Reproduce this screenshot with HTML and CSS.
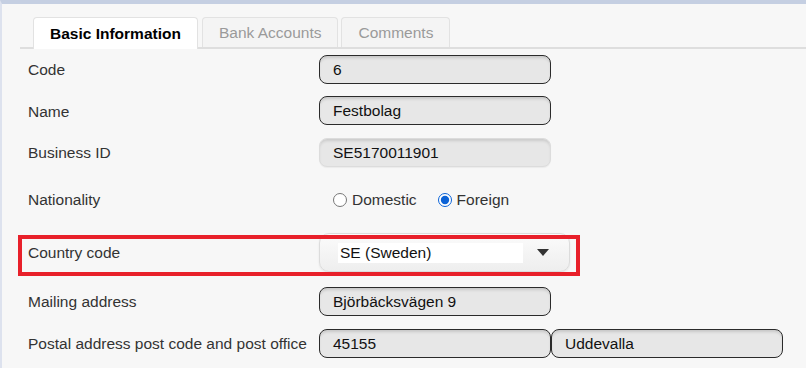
FILE: index.html
```html
<!DOCTYPE html>
<html>
<head>
<meta charset="utf-8">
<link rel="stylesheet" href="styles.css">
</head>
<body>
<div class="page">
  <div class="tabbar">
    <div class="tab active">Basic Information</div>
    <div class="tab">Bank Accounts</div>
    <div class="tab">Comments</div>
  </div>
  <div class="form">
    <div class="row r-code">
      <div class="label">Code</div>
      <div class="field"><div class="input">6</div></div>
    </div>
    <div class="row r-name">
      <div class="label">Name</div>
      <div class="field"><div class="input">Festbolag</div></div>
    </div>
    <div class="row r-bid">
      <div class="label">Business ID</div>
      <div class="field"><div class="input disabled">SE5170011901</div></div>
    </div>
    <div class="row r-nat">
      <div class="label">Nationality</div>
      <div class="field radios">
        <label class="radio"><input type="radio" name="nat"> Domestic</label>
        <label class="radio"><input type="radio" name="nat" checked> Foreign</label>
      </div>
    </div>
    <div class="row r-country">
      <div class="label">Country code</div>
      <div class="field">
        <div class="select">
          <div class="select-text">SE (Sweden)</div>
          <div class="arrow"></div>
        </div>
      </div>
      <div class="highlight"></div>
    </div>
    <div class="row r-mail">
      <div class="label">Mailing address</div>
      <div class="field"><div class="input">Björbäcksvägen 9</div></div>
    </div>
    <div class="row r-postal">
      <div class="label">Postal address post code and post office</div>
      <div class="field pair"><div class="input">45155</div><div class="input">Uddevalla</div></div>
    </div>
  </div>
</div>
</body>
</html>
```

FILE: styles.css
```css
html, body {
  margin: 0;
  padding: 0;
}
body {
  background: #f7f7f7;
  font-family: "Liberation Sans", Arial, sans-serif;
  font-size: 15.5px;
  color: #333;
  border-top: 4px solid #c5cfe2;
  border-left: 2px solid #dde2ee;
  height: 364px;
  overflow: hidden;
}
.page {
  padding-top: 13px;
}
.tabbar {
  display: flex;
  margin-left: 18px;
  padding-left: 13px;
  border-bottom: 2px solid #dedede;
  height: 30px;
}
.tab {
  height: 30px;
  box-sizing: border-box;
  padding: 0 16px;
  margin-right: 3px;
  border: 1px solid #e2e2e2;
  border-bottom: none;
  border-radius: 4px 4px 0 0;
  background: #f4f4f4;
  color: #9a9a9a;
  display: flex;
  align-items: center;
}
.tab.active {
  background: #fff;
  color: #000;
  font-weight: bold;
  height: 32px;
  margin-right: 4px;
}
.form {
  padding-left: 26px;
}
.row {
  display: grid;
  grid-template-columns: 291px auto;
  align-items: center;
  position: relative;
  height: 29px;
}
.r-code { margin-top: 6px; }
.r-name { margin-top: 12px; }
.r-bid { margin-top: 13px; }
.r-nat { margin-top: 18px; }
.r-country { margin-top: 19px; height: 39px; }
.r-mail { margin-top: 15px; }
.r-postal { margin-top: 13px; }
.label {
  color: #333;
}
.r-name .label { margin-top: 3px; }
.input {
  width: 232px;
  height: 29px;
  box-sizing: border-box;
  border: 1px solid #2b2b2b;
  border-radius: 8px;
  background: #e7e7e7;
  box-shadow: inset 0 3px 3px -1px rgba(0, 0, 0, 0.14);
  padding-left: 13px;
  display: flex;
  align-items: center;
  color: #111;
}
.input.disabled {
  border-color: #dcdcdc;
  box-shadow: inset 0 3px 3px -1px rgba(0, 0, 0, 0.12), 0 1px 1px rgba(0,0,0,0.05);
}
.pair {
  display: flex;
}
.radios {
  display: flex;
  align-items: center;
  padding-left: 11px;
  color: #333;
}
.radio {
  display: flex;
  align-items: center;
  margin-right: 18px;
}
.radio input {
  margin: 0 5px 0 3px;
  width: 14px;
  height: 14px;
  accent-color: #0b62d6;
}
.select {
  width: 251px;
  height: 39px;
  box-sizing: border-box;
  border: 1px solid #dcdcdc;
  border-radius: 10px;
  background: linear-gradient(#fbfbfb, #eeeeee);
  box-shadow: 0 1px 2px rgba(0, 0, 0, 0.08);
  display: flex;
  align-items: center;
  padding-left: 18px;
}
.select-text {
  width: 185px;
  height: 20px;
  background: #fff;
  color: #111;
  display: flex;
  align-items: center;
  padding-left: 2px;
  box-sizing: border-box;
}
.arrow {
  margin-left: 14px;
  width: 0;
  height: 0;
  border-left: 6px solid transparent;
  border-right: 6px solid transparent;
  border-top: 7px solid #333;
}
.highlight {
  position: absolute;
  left: -10px;
  top: 2px;
  width: 562px;
  height: 41px;
  box-sizing: border-box;
  border: 4px solid #e8202a;
  pointer-events: none;
}
```
